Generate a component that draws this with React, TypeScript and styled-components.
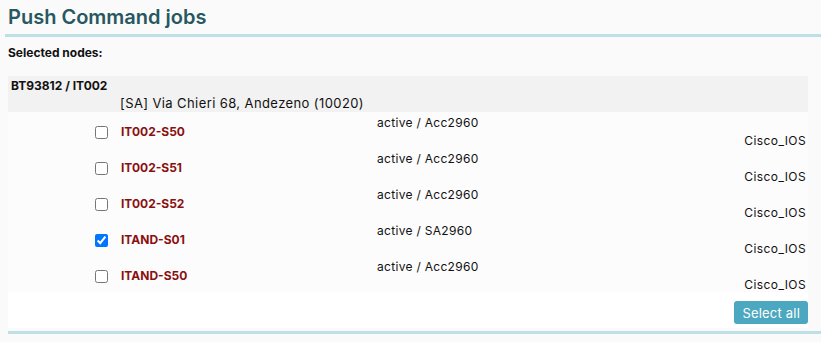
import React from "react";
import styled, { createGlobalStyle } from "styled-components";

const Global = createGlobalStyle`
  html, body { margin: 0; padding: 0; background: #fafafa; }
  body { font-family: Inter, "Open Sans", sans-serif; color: #111; }
`;

const Page = styled.div`
  width: 821px;
  height: 342px;
  padding-top: 4px;
  box-sizing: border-box;
`;

const Title = styled.h2`
  margin: 0 0 0 8px;
  font-size: 20px;
  line-height: 26px;
  font-weight: 600;
  color: #275861;
`;

const Rule = styled.div<{ $left: number; $top: number }>`
  height: 3px;
  background: #bde0e7;
  margin-left: ${(p) => p.$left}px;
  margin-top: ${(p) => p.$top}px;
`;

const Label = styled.div`
  margin: 8px 0 0 8px;
  font-size: 12px;
  font-weight: 700;
  line-height: 16px;
`;

const Block = styled.div`
  width: 800px;
  margin: 15px 0 0 8px;
`;

const GroupHeader = styled.div`
  background: #f2f2f2;
  height: 36px;
  padding: 2px 0 0 3px;
  box-sizing: border-box;
  font-size: 12px;
  line-height: 16px;
`;

const Site = styled.div`
  font-weight: 700;
`;

const Address = styled.div`
  padding-left: 109px;
  font-size: 13px;
  letter-spacing: 0.4px;
  margin-top: 1px;
`;

const Rows = styled.div`
  background: #fcfcfc;
`;

const Row = styled.div`
  height: 36px;
  display: grid;
  grid-template-columns: 113px 256px 1fr auto;
  font-size: 12px;
  line-height: 16px;
`;

const CheckCell = styled.div`
  display: flex;
  align-items: center;
  justify-content: flex-end;
  padding-right: 13px;
  padding-top: 4px;
`;

const Check = styled.input`
  margin: 0;
  width: 13px;
  height: 13px;
`;

const Name = styled.div`
  align-self: center;
  font-weight: 700;
  color: #8a1010;
  padding-top: 4px;
`;

const Status = styled.div`
  align-self: start;
  padding-top: 3px;
  letter-spacing: 0.3px;
`;

const Kind = styled.div`
  align-self: end;
  margin-bottom: -1px;
  padding-right: 2px;
  letter-spacing: 0.4px;
`;

const Footer = styled.div`
  background: #fff;
  height: 36px;
  display: flex;
  justify-content: flex-end;
  align-items: flex-start;
  padding-top: 9px;
  box-sizing: border-box;
`;

const Button = styled.button`
  font-family: inherit;
  font-size: 13px;
  letter-spacing: 0.2px;
  color: #fff;
  background: #4ba8c0;
  border: none;
  border-radius: 3px;
  height: 23px;
  padding: 0 8px;
`;

const nodes = [
  { name: "IT002-S50", status: "active / Acc2960", checked: false },
  { name: "IT002-S51", status: "active / Acc2960", checked: false },
  { name: "IT002-S52", status: "active / Acc2960", checked: false },
  { name: "ITAND-S01", status: "active / SA2960", checked: true },
  { name: "ITAND-S50", status: "active / Acc2960", checked: false },
];

export default function App() {
  return (
    <Page>
      <Global />
      <Title>Push Command jobs</Title>
      <Rule $left={5} $top={4} />
      <Label>Selected nodes:</Label>
      <Block>
        <GroupHeader>
          <Site>BT93812 / IT002</Site>
          <Address>[SA] Via Chieri 68, Andezeno (10020)</Address>
        </GroupHeader>
        <Rows>
          {nodes.map((n) => (
            <Row key={n.name}>
              <CheckCell>
                <Check type="checkbox" defaultChecked={n.checked} />
              </CheckCell>
              <Name>{n.name}</Name>
              <Status>{n.status}</Status>
              <Kind>Cisco_IOS</Kind>
            </Row>
          ))}
        </Rows>
        <Footer>
          <Button>Select all</Button>
        </Footer>
      </Block>
      <Rule $left={8} $top={3} />
    </Page>
  );
}
